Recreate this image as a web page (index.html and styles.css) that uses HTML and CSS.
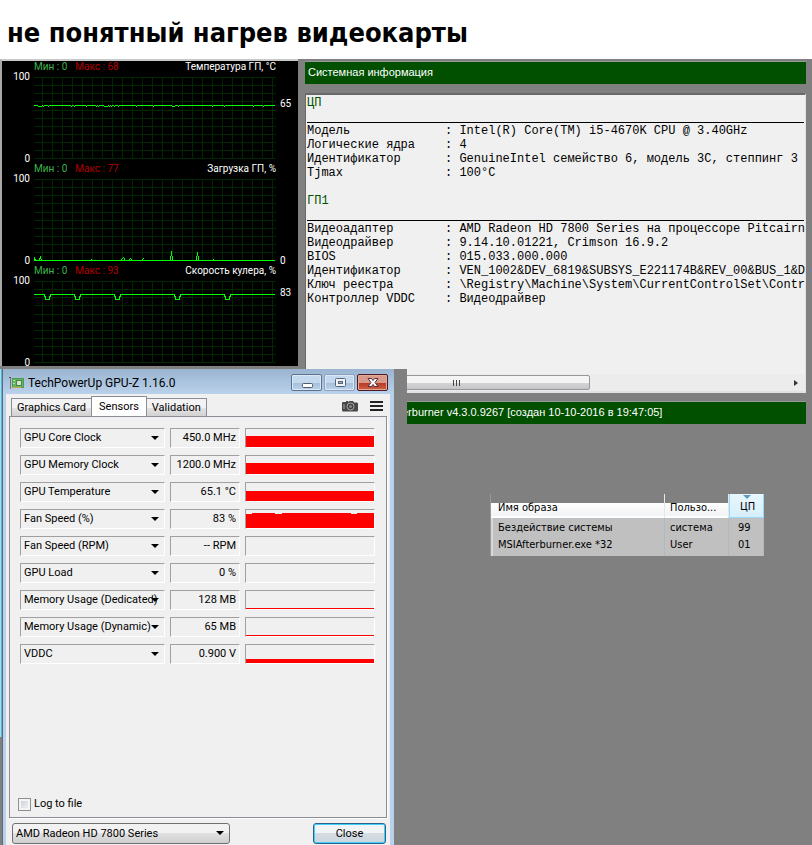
FILE: index.html
```html
<!DOCTYPE html>
<html lang="ru">
<head>
<meta charset="utf-8">
<title>не понятный нагрев видеокарты</title>
<meta name="viewport" content="width=device-width, initial-scale=1">
<link rel="stylesheet" href="styles.css">
</head>
<body>
<header class="page-head"><h1>не понятный нагрев видеокарты</h1></header>
<main class="desktop">
  <svg class="defs" aria-hidden="true">
    <symbol id="grid" viewBox="0 0 242 82">
      <path fill="none" stroke="#002800" d="M0 .5H242M0 8.5H242M0 16.5H242M0 24.5H242M0 33.5H242M0 41.5H242M0 49.5H242M0 57.5H242M0 65.5H242M0 73.5H242M0 81.5H242M8.5 0V82M18.5 0V82M28.5 0V82M38.5 0V82M48.5 0V82M58.5 0V82M68.5 0V82M78.5 0V82M88.5 0V82M98.5 0V82M108.5 0V82M118.5 0V82M128.5 0V82M138.5 0V82M148.5 0V82M158.5 0V82M168.5 0V82M178.5 0V82M188.5 0V82M198.5 0V82M208.5 0V82M218.5 0V82M228.5 0V82M238.5 0V82"/>
    </symbol>
  </svg>
  <div class="monitor">
    <section class="charts">
      <div class="chart">
        <div class="chart-head"><span class="min">Мин : 0</span><span class="max">Макс : 68</span><span class="name">Температура ГП, °C</span></div>
        <div class="scale"><span>100</span><span>0</span></div>
        <svg class="plot" viewBox="0 0 242 82"><use href="#grid"/><path class="trace" d="M0 28.5H4M8 28.5H9M10 28.5H14M15 28.5H37M38 28.5H40M41 28.5H52M53 28.5H62M63 28.5H64M65 28.5H70M74 28.5H75M76 28.5H77M78 28.5H80M81 28.5H84M85 28.5H102M103 28.5H119M120 28.5H138M141 28.5H144M145 28.5H178M179 28.5H190M191 28.5H219M220 28.5H229M230 28.5H241M4 29.5H8M9 29.5H10M14 29.5H15M37 29.5H38M40 29.5H41M52 29.5H53M62 29.5H63M64 29.5H65M70 29.5H74M75 29.5H76M77 29.5H78M80 29.5H81M84 29.5H85M102 29.5H103M119 29.5H120M138 29.5H141M144 29.5H145M178 29.5H179M190 29.5H191M219 29.5H220M229 29.5H230"/></svg>
        <span class="now now-temp">65</span>
      </div>
      <div class="chart">
        <div class="chart-head"><span class="min">Мин : 0</span><span class="max">Макс : 77</span><span class="name">Загрузка ГП, %</span></div>
        <div class="scale"><span>100</span><span>0</span></div>
        <svg class="plot" viewBox="0 0 242 82"><use href="#grid"/><path class="trace" d="M0 81.5H241M.5 78V81M1.5 80V81M5.5 79V81M6.5 77V80M7.5 80V81M57.5 80V81M87.5 80V81M88.5 79V80M89.5 78V79M90.5 79V81M95.5 80V81M96.5 79V80M97.5 80V81M108.5 80V81M109.5 79V80M136.5 77V81M137.5 72V77M138.5 77V81M162.5 77V81M163.5 73V77M164.5 77V81M179.5 80V81"/></svg>
        <span class="now now-load">0</span>
      </div>
      <div class="chart">
        <div class="chart-head"><span class="min">Мин : 0</span><span class="max">Макс : 93</span><span class="name">Скорость кулера, %</span></div>
        <div class="scale"><span>100</span><span>0</span></div>
        <svg class="plot" viewBox="0 0 242 82"><use href="#grid"/><path class="trace" d="M0 13.5H10.5V15.5H11.5V18.5H15.5V15.5H16.5V13.5H40.5V15.5H41.5V18.5H45.5V15.5H46.5V13.5H80.5V15.5H81.5V18.5H85.5V15.5H86.5V13.5H140.5V15.5H141.5V18.5H145.5V15.5H146.5V13.5H190.5V15.5H191.5V18.5H195.5V15.5H196.5V13.5H241"/></svg>
        <span class="now now-fan">83</span>
      </div>
    </section>
    <section class="info">
      <h2 class="bar">Системная информация</h2>
      <div class="report">
        <div class="report-body">
          <h3>ЦП</h3>
          <table>
            <tr><th scope="row">Модель</th><td>: Intel(R) Core(TM) i5-4670K CPU @ 3.40GHz</td></tr>
            <tr><th scope="row">Логические ядра</th><td>: 4</td></tr>
            <tr><th scope="row">Идентификатор</th><td>: GenuineIntel семейство 6, модель 3C, степпинг 3</td></tr>
            <tr><th scope="row">Tjmax</th><td>: 100°C</td></tr>
          </table>
          <h3>ГП1</h3>
          <table>
            <tr><th scope="row">Видеоадаптер</th><td>: AMD Radeon HD 7800 Series на процессоре Pitcairn</td></tr>
            <tr><th scope="row">Видеодрайвер</th><td>: 9.14.10.01221, Crimson 16.9.2</td></tr>
            <tr><th scope="row">BIOS</th><td>: 015.033.000.000</td></tr>
            <tr><th scope="row">Идентификатор</th><td>: VEN_1002&amp;DEV_6819&amp;SUBSYS_E221174B&amp;REV_00&amp;BUS_1&amp;D</td></tr>
            <tr><th scope="row">Ключ реестра</th><td>: \Registry\Machine\System\CurrentControlSet\Contr</td></tr>
            <tr><th scope="row">Контроллер VDDC</th><td>: Видеодрайвер</td></tr>
          </table>
        </div>
        <div class="scroll"><div class="thumb"><i></i><i></i><i></i></div><span class="arrow-right"></span></div>
      </div>
      <p class="bar bar-version">erburner v4.3.0.9267 [создан 10-10-2016 в 19:47:05]</p>
    </section>
  </div>

  <section class="gpuz-layer">
    <div class="edge"></div>
    <div class="window">
      <div class="titlebar">
        <svg class="app-icon" viewBox="0 0 16 14"><path d="M1.500 1V13" stroke="#777" fill="none"/><path d="M0 1.500H2" stroke="#555"/><rect x="3" y="2" width="11" height="9" fill="#63b55f" stroke="#4c9a52"/><rect x="7" y="4" width="5" height="5" fill="#d5e6d0" stroke="#48844b"/><path d="M4 4.500H6M4 7.500H6" stroke="#b7e0a8"/><path d="M3 11.500H12" stroke="#c9a845"/></svg>
        <span class="title">TechPowerUp GPU-Z 1.16.0</span>
        <button class="win min-btn" aria-label="Minimize"><svg viewBox="0 0 12 12"><rect x="1.500" y="6.500" width="10" height="4" rx="1" fill="#fff" stroke="#4f5b69"/></svg></button>
        <button class="win max-btn" aria-label="Maximize"><svg viewBox="0 0 12 12"><rect x="1.500" y="1.500" width="10" height="8" rx="1" fill="#eef4fa" stroke="#566476"/><rect x="4.500" y="4.500" width="4" height="2" fill="#9db7d2" stroke="#566476"/></svg></button>
        <button class="win close-btn" aria-label="Close window"><svg viewBox="0 0 12 12"><path d="M1 1.500H4.500L6 3.500L7.500 1.500H11L8 5.500L11 9.500H7.500L6 7.500L4.500 9.500H1L4 5.500Z" fill="#fff" stroke="#53303a"/></svg></button>
      </div>
      <div class="client">
        <div class="tabs">
          <button class="tab">Graphics Card</button><button class="tab active">Sensors</button><button class="tab">Validation</button>
          <button class="tool camera" aria-label="Screenshot"><svg viewBox="0 0 16 11"><path d="M1 1H4V0H6V1.500L7 0H11L12 1.500H15Q16 1.500 16 3V9Q16 10.500 15 10.500H1Q0 10.500 0 9V2Q0 1 1 1Z" fill="#484848"/><circle cx="8.500" cy="5.500" r="3.500" fill="#444" stroke="#aaa"/><circle cx="8.500" cy="5.500" r="1.500" fill="#888"/><rect x="1" y="3" width="2" height="5" fill="#777"/></svg></button>
          <button class="tool" aria-label="Menu"><svg viewBox="0 0 14 11"><path d="M0 1H13M0 5H13M0 9H13" stroke="#222" stroke-width="2"/></svg></button>
        </div>
        <div class="panel">
          <div class="sensor"><span class="pick"><select aria-label="Sensor 1"><option>GPU Core Clock</option></select></span><output>450.0 MHz</output><div class="graph"><div class="fill" style="height:11px"></div></div></div>
          <div class="sensor"><span class="pick"><select aria-label="Sensor 2"><option>GPU Memory Clock</option></select></span><output>1200.0 MHz</output><div class="graph"><div class="fill" style="height:11px"></div></div></div>
          <div class="sensor"><span class="pick"><select aria-label="Sensor 3"><option>GPU Temperature</option></select></span><output>65.1 °C</output><div class="graph"><div class="fill" style="height:10px"></div></div></div>
          <div class="sensor"><span class="pick"><select aria-label="Sensor 4"><option>Fan Speed (%)</option></select></span><output>83 %</output><div class="graph"><div class="fill fan" style="height:15px"></div></div></div>
          <div class="sensor"><span class="pick"><select aria-label="Sensor 5"><option>Fan Speed (RPM)</option></select></span><output>-- RPM</output><div class="graph"></div></div>
          <div class="sensor"><span class="pick"><select aria-label="Sensor 6"><option>GPU Load</option></select></span><output>0 %</output><div class="graph"></div></div>
          <div class="sensor"><span class="pick"><select aria-label="Sensor 7"><option>Memory Usage (Dedicated)</option></select></span><output>128 MB</output><div class="graph"><div class="fill" style="height:1px"></div></div></div>
          <div class="sensor"><span class="pick"><select aria-label="Sensor 8"><option>Memory Usage (Dynamic)</option></select></span><output>65 MB</output><div class="graph"><div class="fill" style="height:1px"></div></div></div>
          <div class="sensor"><span class="pick"><select aria-label="Sensor 9"><option>VDDC</option></select></span><output>0.900 V</output><div class="graph"><div class="fill" style="height:4px"></div></div></div>
          <label class="log"><input type="checkbox">Log to file</label>
        </div>
        <div class="footer"><span class="pick card"><select aria-label="Graphics card"><option>AMD Radeon HD 7800 Series</option></select></span><button class="close">Close</button></div>
      </div>
    </div>
  </section>

  <table class="tasks">
    <thead><tr><th>Имя образа</th><th>Пользо...</th><th class="sorted">ЦП</th></tr></thead>
    <tbody>
      <tr><td>Бездействие системы</td><td>система</td><td>99</td></tr>
      <tr><td>MSIAfterburner.exe *32</td><td>User</td><td>01</td></tr>
    </tbody>
  </table>
</main>
</body>
</html>
```
FILE: styles.css
```css
* { box-sizing: border-box; }
body {
  margin: 0;
  min-height: 100vh;
  display: flex;
  flex-direction: column;
  background: #fff;
  color: #000;
  font: 11px/14px "Liberation Sans", sans-serif;
}
h1, h2, h3, p { margin: 0; font-weight: normal; }
button, select, input { font: inherit; color: inherit; margin: 0; padding: 0; border-radius: 0; }
svg { display: block; shape-rendering: crispEdges; }
.defs { position: absolute; width: 0; height: 0; }

.page-head { height: 59px; padding: 14px 7px 0; }
.page-head h1 { font: bold 27px/38px "DejaVu Sans Condensed", "DejaVu Sans", sans-serif; white-space: nowrap; }

.desktop { position: relative; flex: 1; background: #808080; overflow: hidden; }
.monitor { display: flex; gap: 7px; padding-right: 6px; }

/* hardware graphs */
.charts {
  flex: 0 0 298px;
  height: 307px;
  padding-top: 1px;
  background: #000;
  border-top: 2px solid #c8c8c8;
  border-left: 2px solid #a8a8a8;
  color: #fff;
  font: 10px/10px Roboto, "Liberation Sans", sans-serif;
}
.chart {
  display: grid;
  grid-template-columns: 28px 242px 1fr;
  grid-template-rows: 10px 82px;
  gap: 5px 4px;
  padding-bottom: 5px;
}
.chart-head { grid-column: 2; display: flex; gap: 8px; white-space: nowrap; }
.min { color: #3cb44a; }
.max { color: #b40000; }
.name { margin-left: auto; }
.scale {
  grid-column: 1;
  display: flex;
  flex-direction: column;
  justify-content: space-between;
  text-align: right;
  margin: -5px 0;
}
.plot { width: 242px; height: 82px; }
.trace { fill: none; stroke: #0f0; }
.now-temp { padding-top: 22px; }
.now-load { padding-top: 77px; }
.now-fan { padding-top: 7px; }

/* system report */
.info { flex: 1; min-width: 0; padding-top: 2px; }
.bar {
  height: 23px;
  padding: 0 3px;
  background: #005000;
  border-top: 1px solid #989898;
  color: #fff;
  font-size: 11px;
  line-height: 21px;
  white-space: nowrap;
}
.bar-version { margin-top: 8px; padding-left: 97px; }
.report {
  margin-top: 9px;
  height: 300px;
  display: flex;
  flex-direction: column;
  background: #f0f0f0;
  border: solid;
  border-width: 2px 1px 2px 1px;
  border-color: #696969 #e3e3e3 #e3e3e3 #696969;
}
.report-body { flex: 1; padding: 1px 1px 0; overflow: hidden; font: 12px/14px "Liberation Mono", monospace; }
.report-body h3 { height: 27px; border-bottom: 1px solid #000; color: #005000; font: inherit; }
.report-body table { table-layout: fixed; width: 100%; border-collapse: collapse; margin: 1px 0 14px; white-space: nowrap; }
.report-body th { width: 138px; padding: 0; text-align: left; font-weight: normal; }
.report-body td { padding: 0; }
.scroll { height: 17px; display: flex; align-items: center; justify-content: space-between; padding-right: 7px; background: #ececec; }
.thumb {
  width: 284px;
  height: 15px;
  display: flex;
  align-items: center;
  gap: 2px;
  padding-left: 146px;
  border: 1px solid #979797;
  border-radius: 2px;
  background: linear-gradient(#f4f4f4 50%, #d6d6d8 50%, #c4c5c8);
}
.thumb i { width: 1px; height: 6px; background: #444; }
.arrow-right { border: solid transparent; border-width: 3px 0 3px 4px; border-left-color: #333; }

/* GPU-Z window */
.gpuz-layer {
  position: absolute;
  top: 310px;
  left: 0;
  bottom: 0;
  width: 407px;
  display: flex;
  background: #808080;
  overflow: hidden;
  font: 11px/14px Roboto, "Liberation Sans", sans-serif;
}
.edge { width: 2px; height: 368px; background: #a9dcf0; border-right: 1px solid #4fb6d6; }
.window { width: 392px; display: flex; flex-direction: column; background: #b9d1ea; border-left: 1px solid #5f6b78; padding: 0 4px 0 3px; }
.titlebar {
  flex: 0 0 25px;
  margin: 0 -4px 0 -3px;
  display: flex;
  align-items: center;
  padding: 2px 6px 0;
  background: linear-gradient(#9ab4d1, #b9d1ea);
  font-size: 12px;
  line-height: 16px;
}
.app-icon { width: 16px; height: 14px; }
.title { margin: 0 auto 0 3px; white-space: nowrap; }
.win {
  width: 31px;
  height: 17px;
  margin-left: 2px;
  display: grid;
  place-items: center;
  border: 1px solid #5d728c;
  border-radius: 2px;
  box-shadow: inset 0 0 0 1px #dce8f5;
  background: linear-gradient(#c5d9ee 50%, #a2bedb 50%, #bcd3eb);
}
.win svg { width: 12px; height: 12px; shape-rendering: auto; }
.max-btn { border-color: #8aa2be; }
.close-btn { border-color: #4b1a20; box-shadow: inset 0 0 0 1px #e4a99d; background: linear-gradient(#d9998a 50%, #b8341f 50%, #cf6148); }
.client { flex: 1; display: flex; flex-direction: column; background: #f0f0f0; padding: 2px 2px 0 3px; }
.tabs { height: 20px; display: flex; align-items: flex-end; padding: 0 4px 0 2px; }
.tab {
  height: 18px;
  padding: 0 5px;
  border: 1px solid #8c8c94;
  border-bottom: 0;
  background: linear-gradient(#f3f3f3 50%, #e4e4e4 50%, #d2d2d2);
  white-space: nowrap;
}
.tab.active { height: 21px; margin: 0 -1px -1px; padding: 0 7px; background: #fff; }
.tool { height: 20px; padding: 0; border: 0; background: none; }
.tool svg { width: 14px; height: 11px; }
.camera { margin: 0 12px 0 auto; }
.camera svg { width: 16px; shape-rendering: auto; }
.panel {
  height: 402px;
  margin-right: 1px;
  padding: 11px 10px 6px;
  display: flex;
  flex-direction: column;
  gap: 7px;
  border: 1px solid #8c8c94;
  box-shadow: 1px 1px #fff;
}
.sensor { display: grid; grid-template-columns: 145px 70px 1fr; column-gap: 5px; height: 20px; }
.sensor .pick, .sensor output, .graph { border: 1px solid; border-color: #a0a0a0 #fff #fff #a0a0a0; }
.pick { position: relative; display: block; }
.pick::after {
  content: "";
  position: absolute;
  right: 5px;
  top: 7px;
  border: solid transparent;
  border-width: 4px 4px 0;
  border-top-color: #000;
  pointer-events: none;
}
.pick select { width: 100%; height: 100%; appearance: none; border: 0; background: none; padding-left: 3px; }
.sensor output { padding: 2px 3px; text-align: right; white-space: nowrap; }
.graph { display: flex; align-items: flex-end; margin-right: 1px; }
.fill { width: 100%; background: #f00; }
.fan { clip-path: polygon(0 1px, 6px 1px, 6px 0, 29px 0, 29px 1px, 36px 1px, 36px 0, 105px 0, 105px 1px, 111px 1px, 111px 0, 100% 0, 100% 100%, 0 100%); }
.log { margin-top: auto; display: flex; align-items: center; gap: 3px; margin-left: -2px; }
.log input {
  appearance: none;
  width: 13px;
  height: 13px;
  border: 1px solid #8e8f8f;
  background: linear-gradient(135deg, #c6cbd1, #f6f6f6);
  box-shadow: inset 0 0 0 2px #f4f4f4;
}
.footer { display: flex; justify-content: space-between; padding: 5px 2px 0 3px; }
.card { width: 218px; height: 21px; border: 1px solid #707070; border-radius: 3px; background: linear-gradient(#f2f2f2 50%, #e0e0e0 50%, #cfcfcf); }
.close {
  width: 73px;
  height: 21px;
  border: 1px solid #2c628b;
  border-radius: 3px;
  box-shadow: inset 0 0 0 1px #3fd0f7;
  background: linear-gradient(#f0f4f7 50%, #d5dde3 50%, #cbd5dc);
}

/* process list */
.tasks {
  position: absolute;
  left: 490px;
  top: 435px;
  width: 274px;
  table-layout: fixed;
  border-collapse: separate;
  border-spacing: 0;
  border-left: 1px solid #999;
  background: #c0c0c0;
  font: 11px/17px "DejaVu Sans Condensed", "DejaVu Sans", sans-serif;
  box-shadow: inset 2px 0 #d8d8d8;
}
.tasks th {
  height: 24px;
  padding: 2px 5px 0;
  text-align: left;
  font-weight: normal;
  background: linear-gradient(#808080 9px, #fff 9px, #f2f3f5 22px, #fff 22px);
  border-right: 1px solid #e4e6ea;
}
.tasks th:first-child { width: 174px; padding-left: 7px; }
.tasks th:nth-child(2) { width: 64px; }
.tasks td { padding: 0 5px; border-right: 1px solid #b3b8c0; white-space: nowrap; }
.tasks td:first-child { padding-left: 7px; }
.tasks td:last-child { padding-left: 9px; }
.tasks tbody tr:first-child td { padding-top: 1px; }
.tasks tbody tr:last-child td { padding-bottom: 3px; }
.tasks .sorted {
  position: relative;
  padding-left: 10px;
  background: linear-gradient(#e8f6fd, #d6effc);
  border: 1px solid #96d9f9;
  border-top: 0;
}
.sorted::before {
  content: "";
  position: absolute;
  left: 13px;
  top: 1px;
  border: solid transparent;
  border-width: 4px 4px 0;
  border-top-color: #5d9cc0;
}
```
